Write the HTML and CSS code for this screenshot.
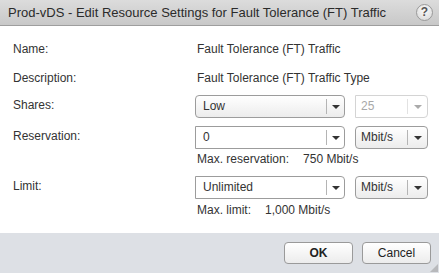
FILE: index.html
```html
<!DOCTYPE html>
<html lang="en">
<head>
    <meta charset="UTF-8">
    <title>Prod-vDS - Edit Resource Settings</title>
    <link rel="stylesheet" href="styles.css">
</head>
<body>
    <div class="dialog">
        <div class="titlebar">
            <span class="title">Prod-vDS - Edit Resource Settings for Fault Tolerance (FT) Traffic</span>
            <span class="help">?</span>
        </div>

        <div class="content">
            <div class="label">Name:</div>
            <div class="value">Fault Tolerance (FT) Traffic</div>

            <div class="label">Description:</div>
            <div class="value">Fault Tolerance (FT) Traffic Type</div>

            <div class="label">Shares:</div>
            <div class="controls">
                <div class="combo combo-main button-like">
                    <span class="combo-text">Low</span>
                    <span class="combo-arrow"><i class="caret"></i></span>
                </div>
                <div class="combo combo-small disabled">
                    <span class="combo-text">25</span>
                    <span class="combo-arrow"><i class="caret"></i></span>
                </div>
            </div>

            <div class="label">Reservation:</div>
            <div class="controls">
                <div class="combo combo-main">
                    <span class="combo-text">0</span>
                    <span class="combo-arrow"><i class="caret"></i></span>
                </div>
                <div class="combo combo-small button-like">
                    <span class="combo-text">Mbit/s</span>
                    <span class="combo-arrow"><i class="caret"></i></span>
                </div>
            </div>
            <div class="spacer"></div>
            <div class="hint"><span>Max. reservation:</span><span>750 Mbit/s</span></div>

            <div class="label">Limit:</div>
            <div class="controls">
                <div class="combo combo-main">
                    <span class="combo-text">Unlimited</span>
                    <span class="combo-arrow"><i class="caret"></i></span>
                </div>
                <div class="combo combo-small button-like">
                    <span class="combo-text">Mbit/s</span>
                    <span class="combo-arrow"><i class="caret"></i></span>
                </div>
            </div>
            <div class="spacer"></div>
            <div class="hint hint-last"><span>Max. limit:</span><span>1,000 Mbit/s</span></div>
        </div>

        <div class="footer">
            <button class="btn">OK</button>
            <button class="btn">Cancel</button>
            <span class="grip"></span>
        </div>
    </div>
</body>
</html>
```

FILE: styles.css
```css
* {
    margin: 0;
    padding: 0;
    box-sizing: border-box;
}

body {
    font-family: 'Liberation Sans', Arial, sans-serif;
    font-size: 12px;
    color: #333;
    background: #fff;
}

.dialog {
    width: 439px;
    height: 273px;
    display: flex;
    flex-direction: column;
    background: #fff;
}

.titlebar {
    height: 26px;
    display: flex;
    align-items: center;
    justify-content: space-between;
    padding: 0 6px 0 8px;
    background: linear-gradient(#dcdcdc, #c8c8c8);
    border-bottom: 1px solid #9e9e9e;
}

.title {
    font-size: 13px;
    color: #2b2b2b;
}

.help {
    width: 17px;
    height: 17px;
    border-radius: 50%;
    border: 1px solid #9a9a9a;
    background: radial-gradient(circle at 50% 35%, #fafafa, #d6d6d6);
    color: #555;
    font-size: 12px;
    font-weight: bold;
    line-height: 15px;
    text-align: center;
}

.content {
    flex: 1;
    display: grid;
    grid-template-columns: 182px 1fr;
    grid-auto-rows: auto;
    padding: 13px 0 0 13px;
    align-content: start;
}

.label {
    line-height: 14px;
    padding-top: 3px;
}

.value {
    line-height: 14px;
    padding: 3px 0 0 2px;
}

.content > .label:nth-child(1),
.content > .value:nth-child(2) {
    margin-bottom: 12px;
}

.content > .label:nth-child(3),
.content > .value:nth-child(4) {
    margin-bottom: 10px;
}

.controls {
    display: flex;
    gap: 10px;
    margin-bottom: 8px;
}

.combo {
    height: 23px;
    display: flex;
    border: 1px solid #9c9c9c;
    border-radius: 0 4px 4px 0;
    background: #fff;
}

.combo-main {
    width: 150px;
}

.combo-small {
    width: 73px;
}

.combo.button-like {
    border-radius: 4px;
    background: linear-gradient(#ffffff, #ececec);
}

.combo-text {
    flex: 1;
    padding: 3px 0 0 7px;
    line-height: 14px;
}

.combo-small .combo-text {
    padding-left: 5px;
}

.combo-arrow {
    width: 18px;
    border-left: 1px solid #b4b4b4;
    margin: 3px 0;
    display: flex;
    align-items: center;
    justify-content: center;
}

.combo-small .combo-arrow {
    width: 20px;
}

.caret {
    width: 0;
    height: 0;
    border-left: 4px solid transparent;
    border-right: 4px solid transparent;
    border-top: 4px solid #333;
}

.combo.disabled {
    border-color: #d4d4d4;
    border-radius: 0 4px 4px 0;
    color: #a8a8a8;
}

.combo.disabled .combo-text {
    padding-left: 5px;
}

.combo.disabled .combo-arrow {
    border-left-color: #e2e2e2;
}

.combo.disabled .caret {
    border-top-color: #aaa;
}

.spacer {
    height: 0;
}

.hint {
    display: flex;
    gap: 14px;
    line-height: 14px;
    padding-left: 2px;
    margin-top: -5px;
    margin-bottom: 10px;
}

.hint-last {
    margin-top: -4px;
}

.footer {
    height: 40px;
    position: relative;
    display: flex;
    justify-content: flex-end;
    align-items: center;
    gap: 9px;
    padding: 0 8px 0 0;
    background: #dde0e5;
}

.btn {
    width: 69px;
    height: 22px;
    font-family: inherit;
    font-size: 12px;
    color: #222;
    border: 1px solid #9a9a9a;
    border-radius: 4px;
    background: linear-gradient(#ffffff, #ececec);
}

.btn:first-child {
    font-weight: bold;
}

.grip {
    position: absolute;
    right: 1px;
    bottom: 1px;
    width: 8px;
    height: 8px;
    background-image: radial-gradient(#8c8c8c 0.6px, transparent 0.8px);
    background-size: 2px 2px;
    clip-path: polygon(100% 0, 100% 100%, 0 100%);
}
```
